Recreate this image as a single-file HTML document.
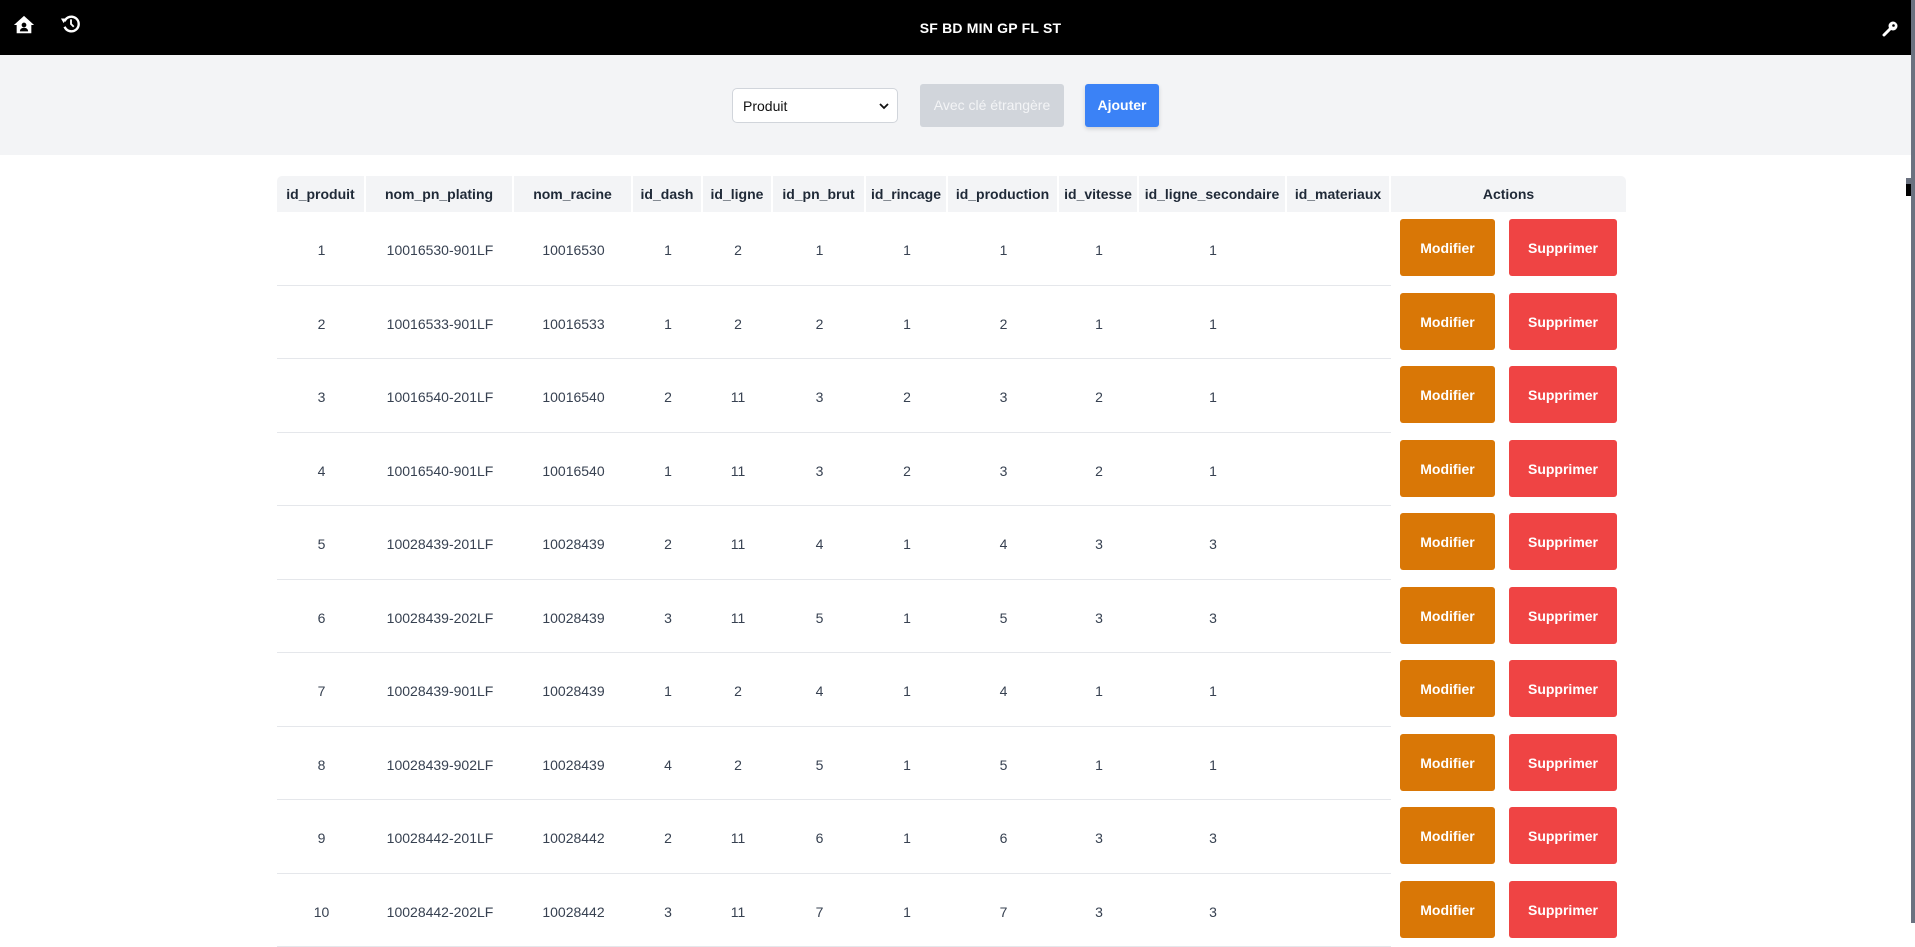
<!DOCTYPE html>
<html><head><meta charset="utf-8">
<style>
*{box-sizing:border-box;margin:0;padding:0}
html,body{width:1915px;height:923px;overflow:hidden;background:#fff;font-family:"Segoe UI","Liberation Sans",sans-serif}
.top{position:absolute;left:0;top:0;width:1915px;height:55px;background:#000;color:#fff}
.title{position:absolute;left:33px;width:1915px;top:20px;text-align:center;font-weight:bold;font-size:14px;letter-spacing:0.2px}
.bar{position:absolute;left:0;top:55px;width:1915px;height:100px;background:#f3f4f6}
.sel{position:absolute;left:732px;top:88px;width:166px;height:35px;background:#fff;border:1px solid #d1d5db;border-radius:5px;font-size:14px;padding:9px 0 0 10px;color:#111}
.sel svg{position:absolute;right:8px;top:13px}
.b1{position:absolute;left:920px;top:84px;width:144px;height:43px;background:#d1d5db;border-radius:3px;color:#f3f4f6;font-size:14px;text-align:center;line-height:43px}
.b2{position:absolute;left:1085px;top:84px;width:74px;height:43px;background:#3b82f6;border-radius:3px;color:#fff;font-size:14px;font-weight:bold;text-align:center;line-height:43px;box-shadow:0 2px 4px rgba(0,0,0,.15)}
table{position:absolute;left:277px;top:176px;border-collapse:separate;border-spacing:0;font-size:14px;color:#374151}
th{background:#f3f4f6;height:36px;font-weight:600;color:#1f2937;text-align:center;border-right:2px solid #fff;white-space:nowrap;padding:0}
th:first-child{border-radius:5px 0 0 0}
th:last-child{border-radius:0 5px 0 0;border-right:none}
td{height:73.5px;text-align:center;border-bottom:1px solid #e5e7eb;padding:4px 0 0 0}
td.a{border-bottom:none;position:relative;padding:0}
.m,.s{position:absolute;top:7px;height:57px;border-radius:3px;color:#fff;font-weight:600;font-size:14px;line-height:59px;text-align:center}
.m{left:9px;width:95px;background:#d97706}
.s{left:118px;width:108px;background:#ef4444}
.sb{position:absolute;left:1911px;top:0;width:4px;height:923px;background:#6b7280}
</style></head><body>
<div class="top">
<svg style="position:absolute;left:13px;top:14px" width="22" height="22" viewBox="0 0 24 24"><path fill="#fff" d="M12 2 1 12h3v9h16v-9h3z"/><circle cx="12" cy="12" r="2.6" fill="#000"/><path fill="#000" d="M7.5 19c0-2.5 2-4 4.5-4s4.5 1.5 4.5 4z"/></svg>
<svg style="position:absolute;left:60px;top:13px" width="22" height="22" viewBox="0 0 24 24" fill="none" stroke="#fff" stroke-width="2.6"><path d="M5 9a8 8 0 1 1 0 6"/><path d="M12 7v5l3 3" stroke-width="2"/><path fill="#fff" stroke="none" d="M1 6l6 0-3 5z"/></svg>
<div class="title">SF BD MIN GP FL ST</div>
<svg style="position:absolute;left:1882px;top:21px" width="16" height="16" viewBox="0 0 16 16"><circle cx="11" cy="5" r="4.5" fill="#fff"/><circle cx="11.5" cy="4.5" r="1.3" fill="#000"/><path d="M8 8 2 14" stroke="#fff" stroke-width="3" stroke-linecap="round"/></svg>
</div>
<div class="bar"></div>
<div class="sel">Produit<svg width="10" height="8" viewBox="0 0 10 8"><path d="M1 2l4 4 4-4" stroke="#111" stroke-width="1.8" fill="none"/></svg></div>
<div class="b1">Avec clé étrangère</div>
<div class="b2">Ajouter</div>
<table>
<colgroup><col style="width:89px"><col style="width:148px"><col style="width:119px"><col style="width:70px"><col style="width:70px"><col style="width:93px"><col style="width:82px"><col style="width:111px"><col style="width:80px"><col style="width:148px"><col style="width:104px"><col style="width:235px"></colgroup>
<tr><th>id_produit</th><th>nom_pn_plating</th><th>nom_racine</th><th>id_dash</th><th>id_ligne</th><th>id_pn_brut</th><th>id_rincage</th><th>id_production</th><th>id_vitesse</th><th>id_ligne_secondaire</th><th>id_materiaux</th><th>Actions</th></tr>
<tr><td>1</td><td>10016530-901LF</td><td>10016530</td><td>1</td><td>2</td><td>1</td><td>1</td><td>1</td><td>1</td><td>1</td><td></td><td class="a"><div class="m">Modifier</div><div class="s">Supprimer</div></td></tr>
<tr><td>2</td><td>10016533-901LF</td><td>10016533</td><td>1</td><td>2</td><td>2</td><td>1</td><td>2</td><td>1</td><td>1</td><td></td><td class="a"><div class="m">Modifier</div><div class="s">Supprimer</div></td></tr>
<tr><td>3</td><td>10016540-201LF</td><td>10016540</td><td>2</td><td>11</td><td>3</td><td>2</td><td>3</td><td>2</td><td>1</td><td></td><td class="a"><div class="m">Modifier</div><div class="s">Supprimer</div></td></tr>
<tr><td>4</td><td>10016540-901LF</td><td>10016540</td><td>1</td><td>11</td><td>3</td><td>2</td><td>3</td><td>2</td><td>1</td><td></td><td class="a"><div class="m">Modifier</div><div class="s">Supprimer</div></td></tr>
<tr><td>5</td><td>10028439-201LF</td><td>10028439</td><td>2</td><td>11</td><td>4</td><td>1</td><td>4</td><td>3</td><td>3</td><td></td><td class="a"><div class="m">Modifier</div><div class="s">Supprimer</div></td></tr>
<tr><td>6</td><td>10028439-202LF</td><td>10028439</td><td>3</td><td>11</td><td>5</td><td>1</td><td>5</td><td>3</td><td>3</td><td></td><td class="a"><div class="m">Modifier</div><div class="s">Supprimer</div></td></tr>
<tr><td>7</td><td>10028439-901LF</td><td>10028439</td><td>1</td><td>2</td><td>4</td><td>1</td><td>4</td><td>1</td><td>1</td><td></td><td class="a"><div class="m">Modifier</div><div class="s">Supprimer</div></td></tr>
<tr><td>8</td><td>10028439-902LF</td><td>10028439</td><td>4</td><td>2</td><td>5</td><td>1</td><td>5</td><td>1</td><td>1</td><td></td><td class="a"><div class="m">Modifier</div><div class="s">Supprimer</div></td></tr>
<tr><td>9</td><td>10028442-201LF</td><td>10028442</td><td>2</td><td>11</td><td>6</td><td>1</td><td>6</td><td>3</td><td>3</td><td></td><td class="a"><div class="m">Modifier</div><div class="s">Supprimer</div></td></tr>
<tr><td>10</td><td>10028442-202LF</td><td>10028442</td><td>3</td><td>11</td><td>7</td><td>1</td><td>7</td><td>3</td><td>3</td><td></td><td class="a"><div class="m">Modifier</div><div class="s">Supprimer</div></td></tr>
</table>
<div class="sb"></div>
<div style="position:absolute;left:1906px;top:178px;width:9px;height:6px;background:#6b7280"></div>
<div style="position:absolute;left:1906px;top:184px;width:5px;height:12px;background:#000"></div>
</body></html>
